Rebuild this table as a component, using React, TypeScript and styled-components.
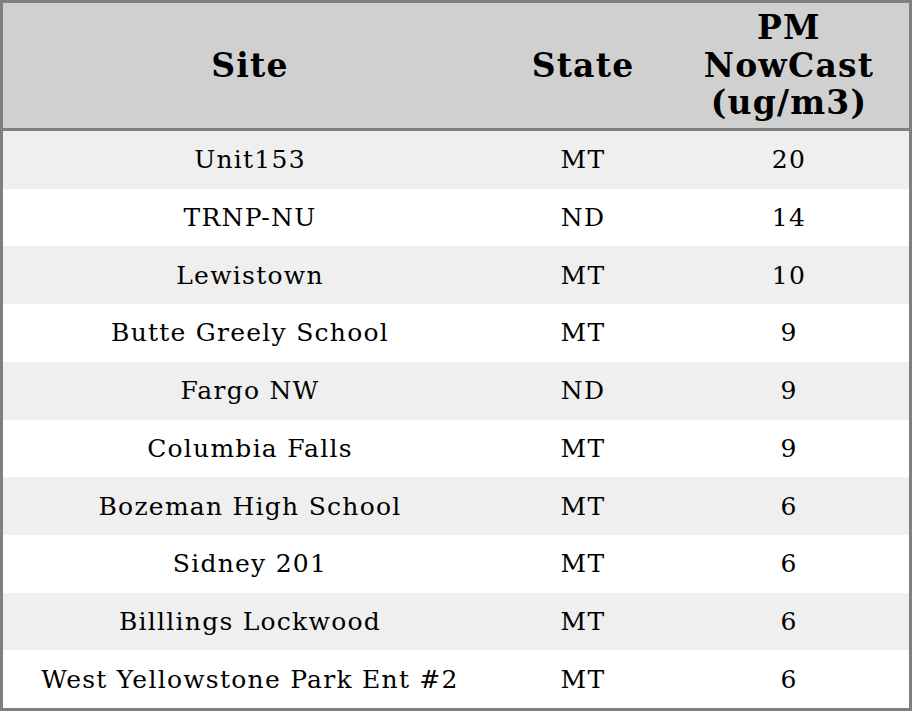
import React from "react"
import styled, { createGlobalStyle } from "styled-components"

const GlobalStyle = createGlobalStyle`
  html, body {
    margin: 0;
    padding: 0;
    background: #ffffff;
  }
  body {
    font-family: "DejaVu Serif", serif;
    color: #000000;
  }
`

const Table = styled.div`
  box-sizing: border-box;
  width: 912px;
  height: 711px;
  border: 3px solid #808080;
  display: flex;
  flex-direction: column;
`

const HeaderRow = styled.div`
  display: grid;
  grid-template-columns: 494px 172px 1fr;
  height: 125px;
  flex: none;
  background: #d0d0d0;
  border-bottom: 3px solid #808080;
`

const HeaderCell = styled.div`
  display: flex;
  align-items: center;
  justify-content: center;
  text-align: center;
  font-weight: bold;
  font-size: 33px;
  line-height: 37.5px;
  letter-spacing: 1.2px;
`

const Row = styled.div<{ striped: boolean }>`
  display: grid;
  grid-template-columns: 494px 172px 1fr;
  flex: 1;
  background: ${({ striped }) => (striped ? "#efefef" : "#ffffff")};
`

const Cell = styled.div`
  display: flex;
  align-items: center;
  justify-content: center;
  font-size: 25px;
  letter-spacing: 1.25px;
  white-space: nowrap;
`

const rows = [
  { site: "Unit153", state: "MT", pm: 20 },
  { site: "TRNP-NU", state: "ND", pm: 14 },
  { site: "Lewistown", state: "MT", pm: 10 },
  { site: "Butte Greely School", state: "MT", pm: 9 },
  { site: "Fargo NW", state: "ND", pm: 9 },
  { site: "Columbia Falls", state: "MT", pm: 9 },
  { site: "Bozeman High School", state: "MT", pm: 6 },
  { site: "Sidney 201", state: "MT", pm: 6 },
  { site: "Billlings Lockwood", state: "MT", pm: 6 },
  { site: "West Yellowstone Park Ent #2", state: "MT", pm: 6 }
]

export default function App() {
  return (
    <>
      <GlobalStyle />
      <Table>
        <HeaderRow>
          <HeaderCell>Site</HeaderCell>
          <HeaderCell>State</HeaderCell>
          <HeaderCell>
            PM
            <br />
            NowCast
            <br />
            (ug/m3)
          </HeaderCell>
        </HeaderRow>
        {rows.map((r, i) => (
          <Row key={r.site} striped={i % 2 === 0}>
            <Cell>{r.site}</Cell>
            <Cell>{r.state}</Cell>
            <Cell>{r.pm}</Cell>
          </Row>
        ))}
      </Table>
    </>
  )
}
